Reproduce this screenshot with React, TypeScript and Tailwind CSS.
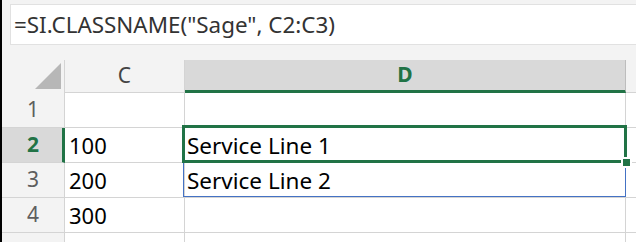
const GRID = "border-[#d4d4d4]";

type Row = { n: number; c: string; d: string };

const ROWS: Row[] = [
  { n: 1, c: "", d: "" },
  { n: 2, c: "100", d: "Service Line 1" },
  { n: 3, c: "200", d: "Service Line 2" },
  { n: 4, c: "300", d: "" },
  { n: 5, c: "", d: "" },
];

const SELECTED_ROW = 2;
// only the top few pixels of row 5 show, so its number is out of view
const LAST_VISIBLE_LABEL = 4;

function CornerTriangle() {
  return (
    <svg width="26" height="26" viewBox="0 0 26 26" aria-hidden="true">
      <polygon points="0,26 26,26 26,0" fill="#b7b7b7" />
    </svg>
  );
}

export default function App() {
  return (
    <div
      className="relative flex h-[242px] w-[636px] overflow-hidden bg-[#f3f3f3] text-black"
      style={{ fontFamily: '"Noto Sans", "Open Sans", sans-serif' }}
    >
      <div className="w-[2px] shrink-0 bg-black" />

      <div className="flex min-w-0 flex-1 flex-col">
        {/* formula bar */}
        <div className="mt-[4px] ml-[8px] flex h-[41px] shrink-0 items-center border border-r-0 border-[#e1e1e1] bg-white pl-[3px] text-[22.4px] text-[#333]">
          =SI.CLASSNAME("Sage", C2:C3)
        </div>

        <div className="h-[15px] shrink-0" />

        {/* column headers */}
        <div className="flex h-[33px] shrink-0">
          <div className={`flex w-[63px] items-end justify-end border-r ${GRID} pb-[4px] pr-[3px]`}>
            <CornerTriangle />
          </div>
          <div className={`flex w-[120px] items-center justify-center border-r border-b ${GRID} text-[21px] text-[#444]`}>
            C
          </div>
          <div className="flex w-[441px] items-center justify-center border-r border-r-[#bdbdbd] border-b-[3px] border-b-[#217346] bg-[#d9d9d9] text-[21px] font-bold text-[#217346]">
            D
          </div>
          <div className={`flex-1 border-b ${GRID}`} />
        </div>

        {/* rows */}
        {ROWS.map((r) => {
          const sel = r.n === SELECTED_ROW;
          return (
            <div key={r.n} className="flex h-[35px] shrink-0">
              <div
                className={
                  sel
                    ? "flex w-[63px] items-center justify-center border-r-[3px] border-b border-r-[#217346] border-b-[#d4d4d4] bg-[#d9d9d9] pl-[2px] text-[21px] font-bold text-[#217346]"
                    : `flex w-[63px] items-center justify-center border-r border-b ${GRID} text-[21px] text-[#5e5e5e]`
                }
              >
                {r.n <= LAST_VISIBLE_LABEL ? r.n : null}
              </div>
              <div className={`flex w-[120px] items-center border-r border-b ${GRID} bg-white pl-[4px] pt-[1px] text-[22px]`}>
                {r.c}
              </div>
              <div className={`flex w-[441px] items-center border-r border-b ${GRID} bg-white pl-[2px] pt-[1px] text-[22.5px]`}>
                {r.d}
              </div>
              <div className={`flex-1 border-b ${GRID} bg-white`} />
            </div>
          );
        })}
      </div>

      {/* D3 highlight, selection and fill handle */}
      <div className="pointer-events-none absolute left-[183px] top-[161px] h-[36px] w-[443px] border border-[#4472c4]" />
      <div className="pointer-events-none absolute left-[182px] top-[125px] h-[38px] w-[445px] border-[3px] border-[#217346]" />
      <div className="pointer-events-none absolute left-[621px] top-[157px] h-[11px] w-[11px] border-2 border-white bg-[#217346]" />
    </div>
  );
}
